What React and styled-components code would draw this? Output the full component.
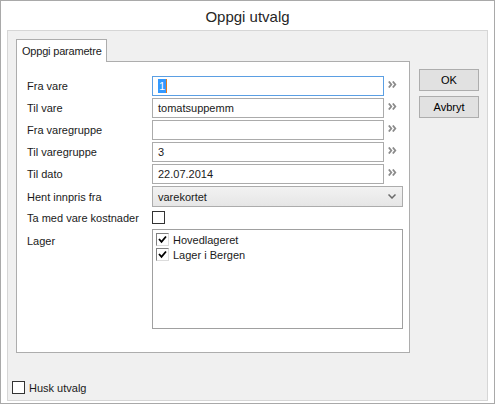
import React from 'react';
import styled, { createGlobalStyle } from 'styled-components';

const Global = createGlobalStyle`
  html, body {
    margin: 0;
    padding: 0;
    background: #ffffff;
  }
  * {
    box-sizing: border-box;
  }
`

const Window = styled.div`
  width: 495px;
  height: 404px;
  border: 1px solid #a9a9a9;
  background: #ffffff;
  display: flex;
  flex-direction: column;
  font-family: "Liberation Sans", Arial, sans-serif;
  color: #1a1a1a;
`

const Title = styled.div`
  height: 29px;
  display: flex;
  align-items: center;
  justify-content: center;
  font-size: 15px;
  color: #262626;
  padding-top: 2px;
`

const Panel = styled.div`
  flex: 1;
  margin: 0 6px 2px 6px;
  border: 1px solid #d6d6d6;
  background: #f0f0f0;
  display: flex;
  flex-direction: column;
  padding: 8px 8px 6px 4px;
`

const TopRow = styled.div`
  display: flex;
  align-items: flex-start;
  margin-left: 4px;
`

const Tabs = styled.div`
  width: 395px;
  display: flex;
  flex-direction: column;
`

const TabHeader = styled.div`
  display: flex;
`

const Tab = styled.div`
  height: 23px;
  padding: 0 4px 0 5px;
  border: 1px solid #adadad;
  border-bottom: none;
  background: #ffffff;
  font-size: 11px;
  letter-spacing: -0.2px;
  display: flex;
  align-items: center;
  margin-bottom: -1px;
  position: relative;
  z-index: 1;
`

const TabPage = styled.div`
  height: 292px;
  border: 1px solid #adadad;
  background: #ffffff;
  padding: 14px 0 0 10px;
`

const Form = styled.div`
  display: grid;
  grid-template-columns: 125px 232px 19px;
  row-gap: 2px;
  align-items: center;
`

const Label = styled.div`
  font-size: 11px;
  color: #1a1a1a;
  align-self: ${({ top }) => (top ? 'start' : 'center')};
  padding-top: ${({ top }) => (top ? '6px' : '0')};
`

const Input = styled.div`
  height: 20px;
  border: 1px solid ${({ focused }) => (focused ? '#5b9fe3' : '#ababab')};
  background: #ffffff;
  font-size: 11px;
  display: flex;
  align-items: center;
  padding-left: 5px;
  white-space: nowrap;
`

const Selected = styled.span`
  background: #3399ff;
  color: #ffffff;
  padding: 0 1px;
  border-right: 1px solid #e07a1f;
  line-height: 14px;
`

const Chevron = styled.div`
  align-self: start;
  padding: 5px 0 0 4px;
  height: 20px;
  display: flex;
`

const Select = styled.div`
  grid-column: 2 / span 2;
  height: 21px;
  border: 1px solid #acacac;
  background: linear-gradient(#f2f2f2, #e6e6e6);
  font-size: 11px;
  display: flex;
  align-items: center;
  justify-content: space-between;
  padding: 0 6px 0 5px;
`

const CheckCell = styled.div`
  grid-column: 2 / span 2;
  margin: 2px 0 3px;
  display: flex;
`

const Box = styled.span`
  width: 13px;
  height: 13px;
  border: 1px solid #333333;
  background: #ffffff;
  display: inline-flex;
  align-items: center;
  justify-content: center;
  flex-shrink: 0;
`

const ListBox = styled.div`
  grid-column: 2 / span 2;
  height: 100px;
  border: 1px solid #a0a0a0;
  background: #ffffff;
  padding: 2px 3px;
  display: flex;
  flex-direction: column;
`

const ListItem = styled.div`
  height: 15px;
  display: flex;
  align-items: center;
  gap: 4px;
  font-size: 11px;
`

const ClassicBox = styled.span`
  width: 13px;
  height: 13px;
  border-top: 1px solid #808080;
  border-left: 1px solid #808080;
  border-right: 1px solid #dcdcdc;
  border-bottom: 1px solid #dcdcdc;
  background: #ffffff;
  display: inline-flex;
  align-items: center;
  justify-content: center;
`

const Buttons = styled.div`
  margin: 30px 0 0 9px;
  display: flex;
  flex-direction: column;
  gap: 5px;
`

const Button = styled.button`
  width: 60px;
  height: 22px;
  border: 1px solid #adadad;
  background: #e1e1e1;
  font-family: "Liberation Sans", Arial, sans-serif;
  font-size: 11px;
  color: #000000;
  padding: 0;
`

const Footer = styled.div`
  margin-top: auto;
  display: flex;
  align-items: center;
  gap: 4px;
  font-size: 11px;
`

const Arrows = () => (
  <svg width="9" height="7" viewBox="0 0 9 7">
    <path d="M0.8 0.5 L3.3 3.5 L0.8 6.5 M4.8 0.5 L7.3 3.5 L4.8 6.5" fill="none" stroke="#8a8a8a" strokeWidth="1.8" />
  </svg>
)

const Down = () => (
  <svg width="8" height="5" viewBox="0 0 8 5">
    <path d="M0.5 0.5 L4 4 L7.5 0.5" fill="none" stroke="#6a6a6a" strokeWidth="1.5" />
  </svg>
)

const Check = () => (
  <svg width="9" height="9" viewBox="0 0 9 9">
    <path d="M1 4 L3.5 6.8 L8 1.5" fill="none" stroke="#000" strokeWidth="1.8" />
  </svg>
)

const fields = [
  { label: 'Fra vare', value: <Selected>1</Selected>, focused: true },
  { label: 'Til vare', value: 'tomatsuppemm' },
  { label: 'Fra varegruppe', value: '' },
  { label: 'Til varegruppe', value: '3' },
  { label: 'Til dato', value: '22.07.2014' },
]

const lagre = ['Hovedlageret', 'Lager i Bergen']

export default function App() {
  return (
    <Window>
      <Global />
      <Title>Oppgi utvalg</Title>
      <Panel>
        <TopRow>
          <Tabs>
            <TabHeader>
              <Tab>Oppgi parametre</Tab>
            </TabHeader>
            <TabPage>
              <Form>
                {fields.map((f) => (
                  <React.Fragment key={f.label}>
                    <Label>{f.label}</Label>
                    <Input focused={f.focused}>{f.value}</Input>
                    <Chevron><Arrows /></Chevron>
                  </React.Fragment>
                ))}
                <Label>Hent innpris fra</Label>
                <Select>
                  <span>varekortet</span>
                  <Down />
                </Select>
                <Label>Ta med vare kostnader</Label>
                <CheckCell><Box /></CheckCell>
                <Label top>Lager</Label>
                <ListBox>
                  {lagre.map((l) => (
                    <ListItem key={l}>
                      <ClassicBox><Check /></ClassicBox>
                      {l}
                    </ListItem>
                  ))}
                </ListBox>
              </Form>
            </TabPage>
          </Tabs>
          <Buttons>
            <Button>OK</Button>
            <Button>Avbryt</Button>
          </Buttons>
        </TopRow>
        <Footer>
          <Box />
          Husk utvalg
        </Footer>
      </Panel>
    </Window>
  );
}
